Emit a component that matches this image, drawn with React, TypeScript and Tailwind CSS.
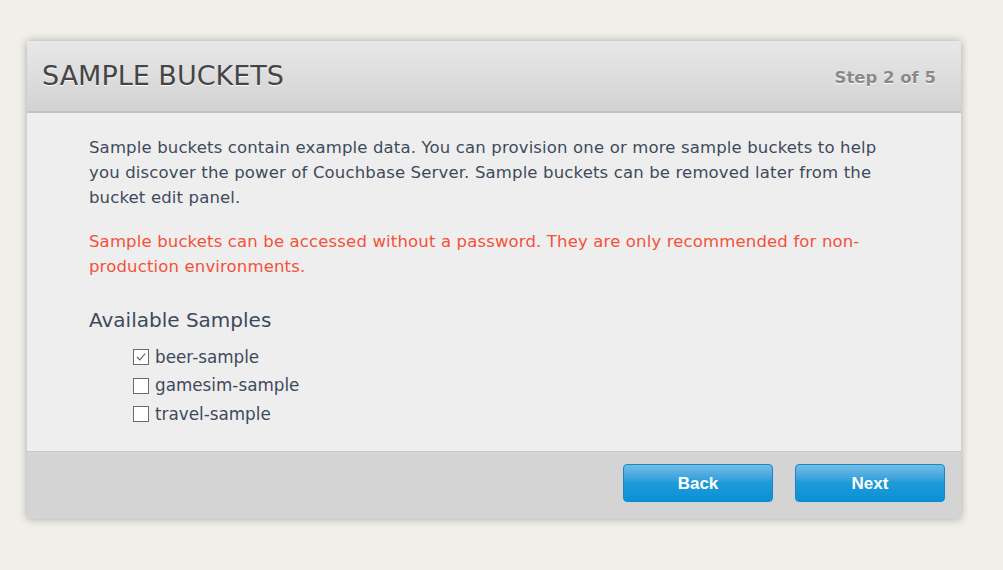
import { useState } from "react";

const samples = ["beer-sample", "gamesim-sample", "travel-sample"];

function Checkbox({ checked, onClick }: { checked: boolean; onClick: () => void }) {
  return (
    <span
      onClick={onClick}
      className="w-[16px] h-[16px] border border-[#6b6b6b] bg-white flex items-center justify-center shrink-0"
    >
      {checked && (
        <svg width="12" height="12" viewBox="0 0 12 12">
          <path d="M2 6 L4.8 9 L10.2 2.5" fill="none" stroke="#4a5a78" strokeWidth="1.1" />
        </svg>
      )}
    </span>
  );
}

export default function App() {
  const [picked, setPicked] = useState<string[]>(["beer-sample"]);

  const toggle = (name: string) => {
    setPicked(p => (p.includes(name) ? p.filter(x => x !== name) : [...p, name]));
  };

  return (
    <div
      className="w-[1003px] h-[570px] bg-[#f1efe9] pt-[41px] pl-[27px]"
      style={{ fontFamily: '"DejaVu Sans", Verdana, sans-serif' }}
    >
      <div className="w-[934px] shadow-[0_0_8px_rgba(0,0,0,0.3)]">
        <div className="h-[72px] flex items-center justify-between pl-[15px] pr-[25px] bg-gradient-to-b from-[#e8e8e8] to-[#d2d2d2] border-b-2 border-[#c0c4c8]">
          <h1 className="text-[27px] text-[#454545] [text-shadow:0_1px_1px_#fff]">
            SAMPLE BUCKETS
          </h1>
          <span className="text-[16.5px] font-bold text-[#8a8a8a] pt-[4px] [text-shadow:0_1px_1px_#fff]">
            Step 2 of 5
          </span>
        </div>

        <div className="bg-[#eeeeee] pl-[62px] pr-[56px] pt-[22px] pb-[22px] text-[16.5px] leading-[25px] text-[#3e4a5c]">
          <p className="tracking-[0.15px]">
            Sample buckets contain example data. You can provision one or more sample buckets to help
            you discover the power of Couchbase Server. Sample buckets can be removed later from the
            bucket edit panel.
          </p>
          <p className="mt-[19px] text-[#f4513a] tracking-[0.15px]">
            Sample buckets can be accessed without a password. They are only recommended for non-production
            environments.
          </p>
          <h2 className="mt-[27px] text-[20px] leading-[28px] text-[#3e4a5c]">Available Samples</h2>
          <div className="mt-[9px] pl-[44px] flex flex-col">
            {samples.map(s => (
              <label key={s} className="flex items-center gap-[6px] h-[28.5px] text-[16.8px]">
                <Checkbox checked={picked.includes(s)} onClick={() => toggle(s)} />
                <span>{s}</span>
              </label>
            ))}
          </div>
        </div>

        <div className="h-[68px] bg-[#d4d4d5] border-t border-[#c9c9c9] flex items-start justify-end gap-[22px] pr-[16px] pt-[12px]">
          {["Back", "Next"].map(b => (
            <button
              key={b}
              className="w-[150px] h-[38px] pt-[3px] rounded-[4px] border border-[#1a86c4] bg-gradient-to-b from-[#72bde8] via-[#1e9ad8] to-[#0592d6] text-white font-bold text-[17px]"
              style={{ fontFamily: '"Liberation Sans", Arial, sans-serif' }}
            >
              {b}
            </button>
          ))}
        </div>
      </div>
    </div>
  );
}
